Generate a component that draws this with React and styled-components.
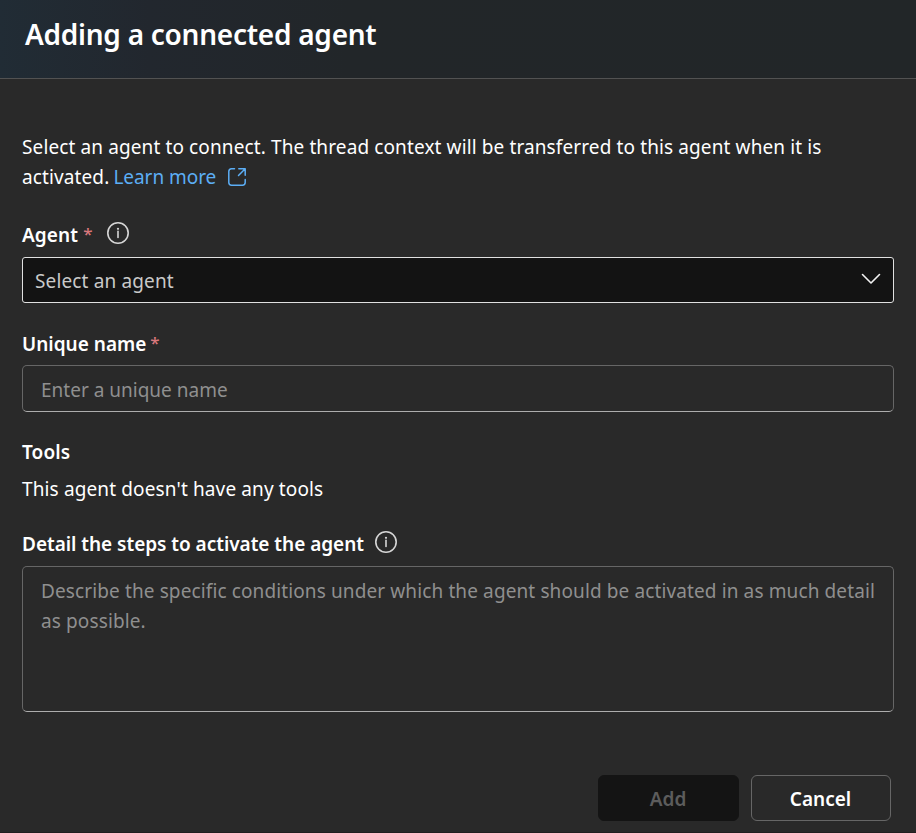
import React from "react";
import styled, { createGlobalStyle } from "styled-components";

const GlobalStyle = createGlobalStyle`
  *, *::before, *::after { box-sizing: border-box; }
  body { margin: 0; background: #292929; }
`;

const Dialog = styled.main`
  display: flex;
  flex-direction: column;
  width: 916px;
  height: 833px;
  overflow: hidden;
  background: #292929;
  border-bottom: 1px solid #211f20;
  color: #fff;
  font: 400 19px/30px "Noto Sans", "Open Sans", sans-serif;
`;

const Header = styled.header`
  flex: none;
  height: 79px;
  padding: 14px 25px 0;
  border-bottom: 1px solid #525252;
  background: linear-gradient(90deg, #212c35 0, #22272e 150px, #222629 350px, #222628 100%);
`;

const Title = styled.h1`
  margin: 0;
  font-size: 28px;
  line-height: 40px;
  font-weight: 600;
  letter-spacing: -0.26px;
`;

const Body = styled.form`
  display: flex;
  flex-direction: column;
  padding: 53px 22px 0;
`;

const Intro = styled.p`
  margin: 0;
  height: 60px;
  white-space: nowrap;
  letter-spacing: 0.115px;
`;

const LearnMore = styled.a`
  display: inline-flex;
  align-items: center;
  gap: 11px;
  margin-left: -1px;
  color: #5caef5;
  text-decoration: none;
  letter-spacing: -0.05px;
`;

const Field = styled.section`
  display: flex;
  flex-direction: column;
  margin-top: ${(p) => p.$top}px;
`;

const LabelRow = styled.div`
  display: flex;
  align-items: center;
  height: 30px;
  margin-bottom: ${(p) => p.$gap || 0}px;
  white-space: nowrap;
`;

const Label = styled.label`
  font-weight: 600;
  letter-spacing: ${(p) => p.$track || 0}px;
`;

const Required = styled.span`
  width: 10px;
  margin-left: ${(p) => p.$gap}px;
  padding-bottom: 2px;
  font-size: 17px;
  font-weight: 500;
  color: #d9777c;
`;

const InfoIcon = styled.svg`
  width: 24px;
  height: 24px;
  margin: -4px 0 0 ${(p) => p.$gap}px;
`;

const Select = styled.div`
  display: flex;
  align-items: center;
  justify-content: space-between;
  height: 46px;
  padding: 2px 12px 0;
  border: 1px solid #e0e0e0;
  border-radius: 3px;
  background: #131313;
  color: #c9c9c9;
  letter-spacing: 0.14px;
`;

const Chevron = styled.svg`
  width: 20px;
  height: 12px;
  margin-top: -4px;
`;

const Input = styled.input`
  height: 47px;
  padding: 2px 18px 0;
  border: 1px solid #666;
  border-bottom-color: #adadad;
  border-radius: 5px;
  background: #292929;
  font: inherit;
  &::placeholder { color: #8f8f8f; opacity: 1; }
`;

const TextArea = styled.textarea`
  height: 146px;
  padding: 9px 10px 0 18px;
  border: 1px solid #666;
  border-bottom-color: #adadad;
  border-radius: 5px;
  background: #292929;
  font: inherit;
  letter-spacing: 0.115px;
  resize: none;
  overflow: hidden;
  &::placeholder { color: #8f8f8f; opacity: 1; }
`;

const Message = styled.p`
  margin: 0;
  letter-spacing: 0.13px;
`;

const Footer = styled.footer`
  display: flex;
  justify-content: flex-end;
  gap: 12px;
  margin-top: 63px;
  padding-right: 25px;
`;

const Button = styled.button`
  width: ${(p) => (p.disabled ? 141 : 140)}px;
  height: 46px;
  padding: 2px 1px 0 0;
  border: 1px solid ${(p) => (p.disabled ? "#141414" : "#666")};
  border-radius: 6px;
  background: ${(p) => (p.disabled ? "#141414" : "#292929")};
  color: ${(p) => (p.disabled ? "#5c5c5c" : "#fff")};
  font: inherit;
  font-weight: 600;
`;

function Info({ gap }) {
  return (
    <InfoIcon $gap={gap} viewBox="0 0 24 24" fill="none" aria-hidden="true">
      <circle cx="12" cy="12" r="10.2" stroke="#d6d6d6" strokeWidth="1.6" />
      <path d="M12 10.4v6" stroke="#d6d6d6" strokeWidth="1.6" strokeLinecap="round" />
      <circle cx="12" cy="7.8" r="1.1" fill="#d6d6d6" />
    </InfoIcon>
  );
}

const LinkIcon = styled.svg`
  width: 20px;
  height: 20px;
`;

function OpenIcon() {
  return (
    <LinkIcon viewBox="0 0 20 20" fill="none" stroke="#5caef5" strokeWidth="1.5" strokeLinecap="round" strokeLinejoin="round" aria-hidden="true">
      <path d="M7.5 1.8H4.5A2.8 2.8 0 0 0 1.8 4.5v11a2.8 2.8 0 0 0 2.7 2.7h11a2.8 2.8 0 0 0 2.7-2.7v-3" />
      <path d="M11.8 1.8h6.4v6.4M18.2 1.8l-6.7 6.7" />
    </LinkIcon>
  );
}

export default function App() {
  return (
    <>
      <GlobalStyle />
      <Dialog>
        <Header>
          <Title>Adding a connected agent</Title>
        </Header>
        <Body>
          <Intro>
            Select an agent to connect. The thread context will be transferred to this agent when it is
            <br />
            activated. <LearnMore href="#">Learn more <OpenIcon /></LearnMore>
          </Intro>
          <Field $top={28}>
            <LabelRow $gap={7}>
              <Label $track={0.1}>Agent</Label>
              <Required $gap={5}>*</Required>
              <Info gap={13} />
            </LabelRow>
            <Select role="combobox">
              Select an agent
              <Chevron viewBox="0 0 20 12" fill="none" aria-hidden="true">
                <path d="M1.5 1.5 10 10l8.5-8.5" stroke="#f2f2f2" strokeWidth="1.6" strokeLinecap="round" strokeLinejoin="round" />
              </Chevron>
            </Select>
          </Field>
          <Field $top={26}>
            <LabelRow $gap={6}>
              <Label htmlFor="name">Unique name</Label>
              <Required $gap={4}>*</Required>
            </LabelRow>
            <Input id="name" placeholder="Enter a unique name" />
          </Field>
          <Field $top={25}>
            <LabelRow $gap={7}>
              <Label as="span" $track={0.1}>Tools</Label>
            </LabelRow>
            <Message>This agent doesn't have any tools</Message>
          </Field>
          <Field $top={25}>
            <LabelRow $gap={7}>
              <Label htmlFor="steps" $track={-0.03}>Detail the steps to activate the agent</Label>
              <Info gap={10} />
            </LabelRow>
            <TextArea id="steps" placeholder="Describe the specific conditions under which the agent should be activated in as much detail as possible." />
          </Field>
        </Body>
        <Footer>
          <Button type="button" disabled>Add</Button>
          <Button type="button">Cancel</Button>
        </Footer>
      </Dialog>
    </>
  );
}
